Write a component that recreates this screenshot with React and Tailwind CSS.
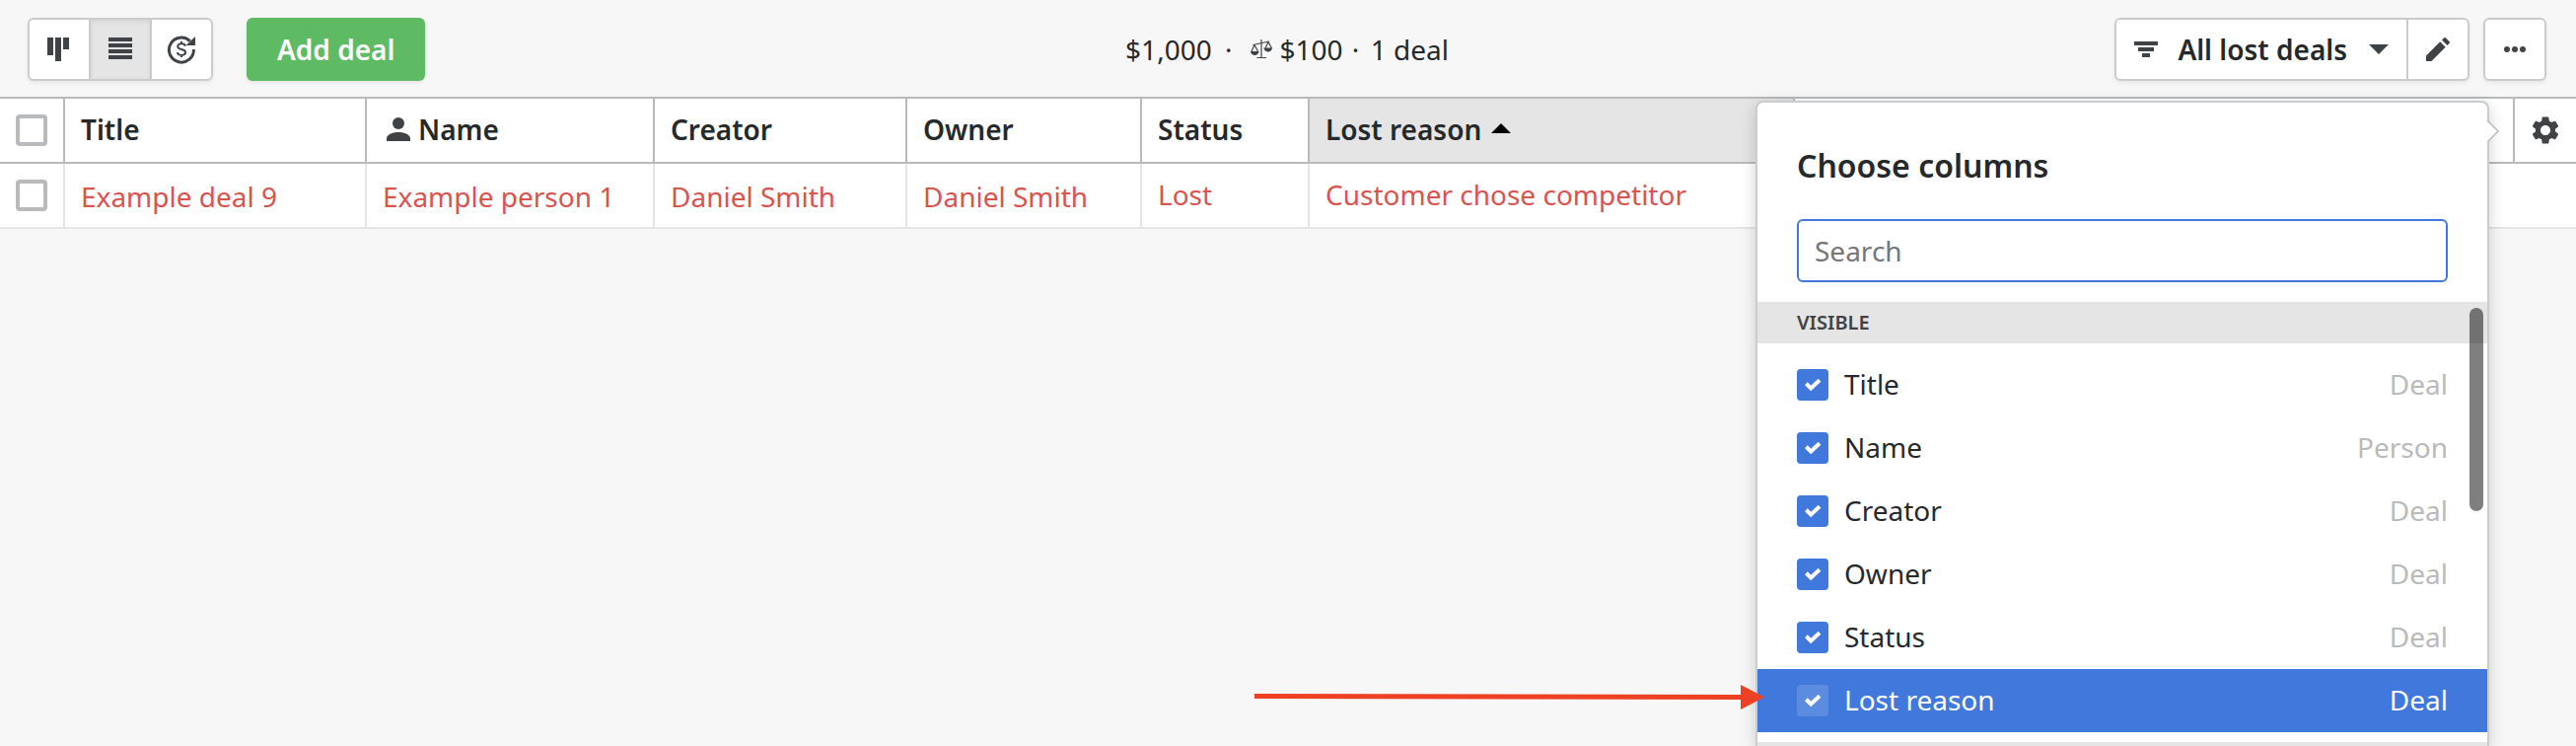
const ink = "text-[#26292c]";

function BoardIcon() {
  return (
    <svg viewBox="0 0 32 32" className="size-8" fill="currentColor" aria-hidden="true">
      <path d="M4 4h6v18H4zM12 4h6v24h-6zM20 4h6v12h-6z" />
    </svg>
  );
}

function ListIcon() {
  return (
    <svg viewBox="0 0 32 32" className="size-8" fill="currentColor" aria-hidden="true">
      <path d="M4 4h24v4H4zM4 10h24v4H4zM4 16h24v4H4zM4 22h24v4H4z" />
    </svg>
  );
}

function ForecastIcon() {
  return (
    <svg viewBox="0 0 32 32" className="size-8" fill="none" stroke="currentColor" aria-hidden="true">
      <path d="M24.600 7.600A12.500 12.500 0 1 0 28.400 16" strokeWidth="3" />
      <path d="M30 3v9h-9.500z" fill="currentColor" stroke="none" />
      <path
        d="M20 12.700c-.4-1.600-1.900-2.500-4-2.500-2.300 0-3.800 1.100-3.800 2.800 0 1.900 1.800 2.500 3.800 3 2.200.5 4.100 1.100 4.100 3.100 0 1.700-1.600 2.800-4 2.800s-4-1-4.300-2.700M16 8v2.500M16 21.500V24"
        strokeWidth="2"
      />
    </svg>
  );
}

function ScalesIcon() {
  return (
    <svg viewBox="0 0 24 20" className="h-5 w-6 text-[#404346]" aria-hidden="true">
      <path
        d="M3.500 5.500 20 2M12 0v18.500M7.500 18.500h9.500M5 5.500 2 12M5 5.500l3.500 6.500M19 2.500l-3 6.500M19 2.500 22.500 9"
        fill="none"
        stroke="currentColor"
        strokeWidth="1.200"
      />
      <path d="M1 12h8.500a4.200 4 0 0 1-8.500 0zM14.500 8.500H23a4.200 4 0 0 1-8.500 0z" fill="currentColor" />
    </svg>
  );
}

function FilterIcon() {
  return (
    <svg viewBox="0 0 24 16" className="h-4 w-6" fill="currentColor" aria-hidden="true">
      <path d="M0 0h24v4H0zM4 6h16v4H4zM8 12h8v4H8z" />
    </svg>
  );
}

function PencilIcon() {
  return (
    <svg viewBox="0 0 24 24" className="size-6" fill="currentColor" aria-hidden="true">
      <path d="M0 18.500 14.200 4.300l5.500 5.500L5.500 24H0zM16 2.500 18 .5a1.500 1.500 0 0 1 2.100 0l3.400 3.400a1.500 1.500 0 0 1 0 2.100l-2 2z" />
    </svg>
  );
}

function DotsIcon() {
  return (
    <svg viewBox="0 0 22 6" className="h-1.5 w-[22px]" fill="currentColor" aria-hidden="true">
      <circle cx="3" cy="3" r="3" />
      <circle cx="11" cy="3" r="3" />
      <circle cx="19" cy="3" r="3" />
    </svg>
  );
}

function PersonIcon() {
  return (
    <svg viewBox="0 0 24 24" className="size-6 text-[#404346]" fill="currentColor" aria-hidden="true">
      <circle cx="12" cy="6" r="6" />
      <path d="M0 24v-2.500C0 17.500 5.500 15 12 15s12 2.500 12 6.500V24z" />
    </svg>
  );
}

function GearIcon() {
  return (
    <svg viewBox="2 2 20 20" className="size-7" fill="currentColor" aria-hidden="true">
      <path d="M19.140 12.940c.040-.3.060-.610.060-.940 0-.320-.020-.640-.070-.940l2.030-1.580c.180-.140.230-.410.120-.610l-1.920-3.320c-.120-.220-.370-.290-.590-.220l-2.390.960c-.5-.380-1.030-.7-1.620-.940l-.360-2.540c-.040-.240-.240-.410-.480-.410h-3.840c-.240 0-.430.170-.470.410l-.360 2.540c-.590.240-1.130.570-1.620.940l-2.390-.960c-.220-.080-.470 0-.590.220L2.740 8.870c-.120.210-.080.470.120.610l2.030 1.580c-.050.3-.090.630-.090.940s.020.640.070.940l-2.030 1.580c-.180.140-.230.410-.120.610l1.920 3.320c.120.220.370.290.590.220l2.390-.960c.5.380 1.030.7 1.620.940l.360 2.540c.050.240.240.410.480.410h3.840c.240 0 .440-.170.470-.410l.360-2.540c.590-.240 1.130-.560 1.620-.940l2.390.960c.220.080.470 0 .590-.220l1.920-3.320c.120-.220.070-.470-.120-.610l-2.010-1.580zM12 15.600c-1.980 0-3.600-1.620-3.600-3.600s1.620-3.600 3.600-3.600 3.600 1.620 3.600 3.600-1.620 3.600-3.600 3.600z" />
    </svg>
  );
}

const views = [
  { label: "Pipeline view", Icon: BoardIcon },
  { label: "List view", Icon: ListIcon, active: true },
  { label: "Forecast view", Icon: ForecastIcon },
];

const columns = [
  { label: "Title", value: "Example deal 9", link: true },
  { label: "Name", value: "Example person 1", link: true, icon: true },
  { label: "Creator", value: "Daniel Smith", link: true },
  { label: "Owner", value: "Daniel Smith", link: true },
  { label: "Status", value: "Lost" },
  { label: "Lost reason", value: "Customer chose competitor", sorted: true },
];

const choices = [
  { label: "Title", source: "Deal" },
  { label: "Name", source: "Person" },
  { label: "Creator", source: "Deal" },
  { label: "Owner", source: "Deal" },
  { label: "Status", source: "Deal" },
  { label: "Lost reason", source: "Deal", selected: true },
];

function Toolbar() {
  return (
    <header className="grid grid-cols-[1fr_auto_1fr] items-center border-b-2 border-[#b9babb] pt-[18px] pr-[30px] pb-4 pl-7">
      <div className="flex items-center gap-[34px]">
        <div className="flex h-16 divide-x-2 divide-[#cbcccd] overflow-hidden rounded-md border-2 border-[#cbcccd] bg-white text-[#404346] shadow-[0_2px_4px_rgba(0,0,0,0.07)]">
          {views.map(({ label, Icon, active }) => (
            <button
              key={label}
              type="button"
              aria-label={label}
              aria-pressed={Boolean(active)}
              className={`box-content flex w-[60px] items-center justify-center ${active ? "bg-[#e5e5e5] shadow-[inset_0_2px_4px_rgba(0,0,0,0.08)]" : ""}`}
            >
              <Icon />
            </button>
          ))}
        </div>
        <button
          type="button"
          className="h-16 rounded-md bg-[#5fbb63] px-[31px] font-semibold text-white shadow-[0_2px_4px_rgba(0,0,0,0.07)]"
        >
          Add deal
        </button>
      </div>

      <p className="flex items-center whitespace-pre">
        <span>$1,000 </span>
        <span className="px-1.5">·</span>
        <span className="flex items-center gap-1.5 pl-3">
          <ScalesIcon />
          <span>$100 </span>
        </span>
        <span className="pr-1 pl-0.5">·</span>
        <span> 1 deal</span>
      </p>

      <div className="flex items-center justify-end gap-3.5 text-[#404346]">
        <div className="flex h-16 divide-x-2 divide-[#cbcccd] rounded-md border-2 border-[#cbcccd] bg-white shadow-[0_2px_4px_rgba(0,0,0,0.07)]">
          <button type="button" className="flex items-center px-[18px]">
            <FilterIcon />
            <span className={`pr-[22px] pl-5 font-semibold ${ink}`}>All lost deals</span>
            <svg viewBox="0 0 20 10" className="h-2.5 w-5" fill="currentColor" aria-hidden="true">
              <path d="M0 0h20L10 10z" />
            </svg>
          </button>
          <button type="button" aria-label="Edit filter" className="box-content flex w-[60px] items-center justify-center">
            <PencilIcon />
          </button>
        </div>
        <button
          type="button"
          aria-label="More options"
          className="flex size-16 items-center justify-center rounded-md border-2 border-[#cbcccd] bg-white shadow-[0_2px_4px_rgba(0,0,0,0.07)]"
        >
          <DotsIcon />
        </button>
      </div>
    </header>
  );
}

function RowCheckbox({ label }) {
  return (
    <input
      type="checkbox"
      aria-label={label}
      className="mx-auto block size-8 appearance-none rounded border-4 border-[#b9babb] bg-white"
    />
  );
}

function DealsTable() {
  return (
    <table className="w-full table-fixed border-separate border-spacing-0 bg-white text-left">
      <colgroup>
        <col className="w-[66px]" />
        <col className="w-[306px]" />
        <col className="w-[292px]" />
        <col className="w-[256px]" />
        <col className="w-[238px]" />
        <col className="w-[170px]" />
        <col className="w-[492px]" />
        <col />
        <col className="w-[62px]" />
      </colgroup>
      <thead>
        <tr className="h-[66px]">
          <th className="border-r-2 border-b-2 border-[#b9babb] p-0">
            <RowCheckbox label="Select all deals" />
          </th>
          {columns.map((column) => (
            <th
              key={column.label}
              scope="col"
              className={`border-r-2 border-b-2 border-[#b9babb] px-4 pt-0 pb-0.5 font-semibold ${column.sorted ? "bg-[#e5e5e5]" : ""}`}
            >
              <div className="flex items-center gap-2">
                {column.icon && (
                  <span className="pl-1">
                    <PersonIcon />
                  </span>
                )}
                {column.label}
                {column.sorted && (
                  <svg viewBox="0 0 20 12" className="ml-0.5 h-3 w-5 text-black" fill="currentColor" aria-hidden="true">
                    <path d="M0 10h20L10 0z" />
                  </svg>
                )}
              </div>
            </th>
          ))}
          <td className="border-r-2 border-b-2 border-[#b9babb] p-0" />
          <th className="border-b-2 border-[#b9babb] p-0 text-[#404346]">
            <button type="button" aria-label="Choose columns" className="flex h-16 w-full items-center justify-center">
              <GearIcon />
            </button>
          </th>
        </tr>
      </thead>
      <tbody>
        <tr className="h-[66px] text-[#d9534f]">
          <td className="border-r-2 border-b-2 border-[#e5e5e5] p-0">
            <RowCheckbox label="Select Example deal 9" />
          </td>
          {columns.map((column) => (
            <td
              key={column.label}
              className={`border-r-2 border-b-2 border-[#e5e5e5] px-4 whitespace-nowrap ${column.link ? "pt-0.5 pb-0" : "pt-0 pb-0.5"}`}
            >
              {column.link ? <a href="#deal">{column.value}</a> : column.value}
            </td>
          ))}
          <td colSpan={2} className="border-b-2 border-[#e5e5e5] p-0" />
        </tr>
      </tbody>
    </table>
  );
}

function ColumnChoice({ label, source, selected }) {
  return (
    <li>
      <label
        className={`flex h-16 items-center gap-4 px-10 ${selected ? "bg-[#4178db] text-white" : ""}`}
      >
        <span className="grid place-items-center">
          <input
            type="checkbox"
            defaultChecked
            className={`col-start-1 row-start-1 size-8 appearance-none rounded ${selected ? "bg-[#5c8ce0]" : "bg-[#4178db]"}`}
          />
          <svg viewBox="0 0 32 32" className="pointer-events-none col-start-1 row-start-1 size-8" aria-hidden="true">
            <path d="m9.400 14.800 4.800 4.600 8.800-8.100" fill="none" stroke="#fff" strokeWidth="4" />
          </svg>
        </span>
        <span className="flex-1 pb-0.5">{label}</span>
        <span className={`pb-0.5 ${selected ? "" : "text-[#b9babb]"}`}>{source}</span>
      </label>
    </li>
  );
}

function ColumnPicker() {
  return (
    <section className="absolute top-[102px] right-[88px] bottom-0 flex w-[744px] flex-col rounded-t-lg border-2 border-b-0 border-[#cbcccd] bg-white pt-10 shadow-[0_4px_16px_rgba(0,0,0,0.18)]">
      <svg viewBox="0 0 12 24" className="absolute top-[17px] -right-3 h-6 w-3" aria-hidden="true">
        <path d="M0 1 11 12 0 23" fill="#fff" stroke="#b9babb" strokeWidth="1.500" />
      </svg>
      <h2 className="px-10 text-[32px] leading-12 font-semibold">Choose columns</h2>
      <div className="px-10 pt-[30px] pb-5">
        <input
          type="text"
          aria-label="Search columns"
          placeholder="Search"
          className="block h-16 w-full rounded-md border-2 border-[#4178db] bg-white px-4 placeholder:text-[#747678]"
        />
      </div>
      <div className="relative min-h-0 flex-1 overflow-hidden">
        <h3 className="bg-[#e5e5e5] px-10 text-[20px] leading-[42px] font-semibold text-[#404346]">VISIBLE</h3>
        <ul className="py-2.5">
          {choices.map((choice) => (
            <ColumnChoice key={choice.label} {...choice} />
          ))}
        </ul>
        <div className="h-10 bg-[#e5e5e5]" />
        <div className="absolute top-1.5 right-1 h-[206px] w-3.5 rounded-full bg-black/50" />
      </div>
    </section>
  );
}

function PointerArrow() {
  return (
    <svg
      viewBox="0 0 518 26"
      className="pointer-events-none absolute top-[693px] right-[822px] h-[26px] w-[518px]"
      aria-hidden="true"
    >
      <path d="M0 12.500 496 13.500" stroke="#ee4023" strokeWidth="5" />
      <path d="M493 1v25l24-12.500z" fill="#ee4023" />
    </svg>
  );
}

export default function App() {
  return (
    <div
      className={`relative h-screen overflow-hidden bg-[#f7f7f7] font-['Noto_Sans','Open_Sans',sans-serif] text-[28px] leading-10 ${ink}`}
    >
      <Toolbar />
      <DealsTable />
      <ColumnPicker />
      <PointerArrow />
    </div>
  );
}
